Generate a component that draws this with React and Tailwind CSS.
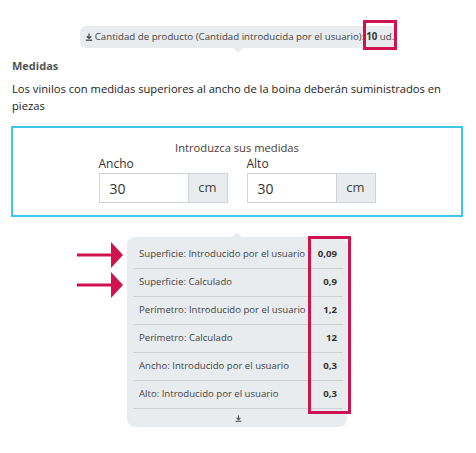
import React from "react";

// small "download" style arrow (arrow down onto a bar)
function ArrowToLine({ className = "" }) {
  return (
    <svg viewBox="0 0 10 10" className={className} fill="none" stroke="currentColor" strokeWidth="1.6">
      <path d="M5 0.5v6" />
      <path d="M2.2 4 5 6.8 7.8 4" />
      <path d="M1 9h8" />
    </svg>
  );
}

function PointerArrow({ className = "" }) {
  return (
    <svg viewBox="0 0 46 26" className={className}>
      <rect x="0" y="11.5" width="36" height="3" fill="#d0134f" />
      <polygon points="34,0 46,13 34,26" fill="#d0134f" />
    </svg>
  );
}

const rows = [
  { label: "Superficie: Introducido por el usuario", value: "0,09" },
  { label: "Superficie: Calculado", value: "0,9" },
  { label: "Perímetro: Introducido por el usuario", value: "1,2" },
  { label: "Perímetro: Calculado", value: "12" },
  { label: "Ancho: Introducido por el usuario", value: "0,3" },
  { label: "Alto: Introducido por el usuario", value: "0,3" },
];

function MeasureInput({ label, value }) {
  return (
    <div className="w-[129px]">
      <div className="text-[12px] leading-[16px] text-[#333] mb-[1px]">{label}</div>
      <div className="flex h-[30px] border border-[#ced4da]">
        <div className="flex-1 flex items-center pl-[10px] text-[14px] text-[#333] bg-white">{value}</div>
        <div className="w-[39px] flex items-center justify-center bg-[#e9ecef] border-l border-[#ced4da] text-[13px] text-[#444]">
          cm
        </div>
      </div>
    </div>
  );
}

export default function App() {
  return (
    <div className="w-[476px] h-[453px] bg-white font-['Open_Sans',sans-serif] overflow-hidden">
      {/* quantity tooltip */}
      <div className="flex justify-center pt-[26px]">
        <div className="relative flex items-center h-[22px] pl-[5px] pr-[2px] rounded-[6px] bg-[#e9ecef] text-[9.7px] text-[#444]">
          <ArrowToLine className="w-[8px] h-[8px] mr-[2px] text-[#444]" />
          <span>Cantidad de producto (Cantidad introducida por el usuario):</span>
          <span className="relative inline-block leading-[22px] ml-[2px]">
            <b className="font-bold text-[#333]">10</b> ud.
            <span className="absolute -left-[3px] -right-[3px] -top-[6px] -bottom-[2px] border-[3px] border-[#d0134f]" />
          </span>
          <span className="absolute left-1/2 -bottom-[5px] -translate-x-1/2 w-0 h-0 border-l-[5px] border-r-[5px] border-t-[5px] border-l-transparent border-r-transparent border-t-[#e9ecef]" />
        </div>
      </div>

      {/* description */}
      <div className="px-[12px] mt-[10px]">
        <div className="text-[11px] leading-[16px] font-bold text-[#555]">Medidas</div>
        <p className="mt-[6px] text-[11.2px] leading-[17px] text-[#222]">
          Los vinilos con medidas superiores al ancho de la boina deberán suministrados en piezas
        </p>
      </div>

      {/* measures form */}
      <div className="ml-[11px] w-[452px] mt-[12px] border-2 border-[#3cc8e8] pt-[12px] pb-[12px]">
        <div className="text-center text-[11.2px] leading-[16px] text-[#4d3b33]">Introduzca sus medidas</div>
        <div className="flex justify-center gap-[19px]">
          <MeasureInput label="Ancho" value="30" />
          <MeasureInput label="Alto" value="30" />
        </div>
      </div>

      {/* calculated values tooltip */}
      <div className="relative ml-[127px] w-[220px] mt-[20px] rounded-[8px] bg-[#e9ecef] pt-[4px] pl-[6px] pr-[4px]">
        <span className="absolute left-[105px] -top-[5px] w-0 h-0 border-l-[5px] border-r-[5px] border-b-[5px] border-l-transparent border-r-transparent border-b-[#e9ecef]" />
        <PointerArrow className="absolute -left-[50px] top-[5px] w-[46px] h-[26px]" />
        <PointerArrow className="absolute -left-[50px] top-[35px] w-[46px] h-[26px]" />
        {rows.map((r) => (
          <div key={r.label} className="flex items-center justify-between h-[28px] border-b border-[#cfd3d7] text-[9.6px]">
            <span className="pl-[6px] text-[#444]">{r.label}</span>
            <span className="pr-[6px] font-bold text-[#333]">{r.value}</span>
          </div>
        ))}
        <div className="h-[18px] flex justify-center items-center">
          <ArrowToLine className="w-[7px] h-[7px] text-[#555]" />
        </div>
        <span className="absolute left-[181px] -top-[1px] w-[43px] h-[178px] border-[3px] border-[#d0134f]" />
      </div>
    </div>
  );
}
